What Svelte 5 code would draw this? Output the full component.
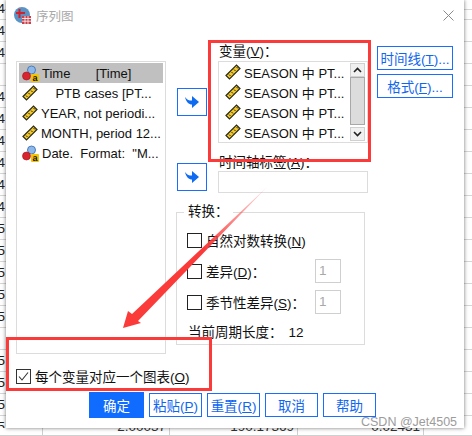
<script>
  const leftDigits = ['4','4','4','','4','4','4','4','4','4','5','5','5','5','5','','5','5','5','5']
  const sourceVars = [
    { kind: 'nominal', label: 'Time       [Time]', selected: true },
    { kind: 'scale', label: '    PTB cases [PT...' },
    { kind: 'scale', label: 'YEAR, not periodi...' },
    { kind: 'scale', label: 'MONTH, period 12...' },
    { kind: 'nominal', label: 'Date.  Format:  "M...' }
  ]
  const chosenVars = ['SEASON 中 PT...', 'SEASON 中 PT...', 'SEASON 中 PT...', 'SEASON 中 PT...']
</script>

{#snippet ruler()}
  <svg class="icon" width="16" height="16" viewBox="0 0 16 16">
    <path d="M1 11.5 11.5 1 15 4.5 4.5 15Z" fill="#f2c72c" stroke="#2b2b1a" stroke-width="1.2" />
    <path d="M4 10.5 5.5 12M6.5 8 8 9.5M9 5.5 10.5 7M11.5 3 13 4.5" stroke="#2b2b1a" stroke-width="1" fill="none" />
  </svg>
{/snippet}

{#snippet nominal()}
  <svg class="icon" width="17" height="17" viewBox="0 0 17 17">
    <circle cx="9.5" cy="5" r="4" fill="#8db8e8" stroke="#4a7db8" />
    <circle cx="4.5" cy="11" r="4" fill="#d9232e" stroke="#9a1820" stroke-width=".6" />
    <rect x="9" y="9" width="8" height="8" rx="1" fill="#f5c400" />
    <text x="13" y="15.6" class="a-glyph">a</text>
  </svg>
{/snippet}

{#snippet arrowBtn()}
  <div class="arrow-btn">
    <svg width="16" height="14" viewBox="0 0 16 14">
      <path d="M1 2c2 3 4 3.6 7 3.6V1l7 6-7 6V9.6C5 9.6 2 7 1 2Z" fill="#0f6cf0" />
    </svg>
  </div>
{/snippet}

<div class="screen">
  <div class="strip">
    {#each leftDigits as d}
      <div class="strip-cell">{d}</div>
    {/each}
  </div>

  <div class="dialog">
    <header class="title">
      <svg width="17" height="17" viewBox="0 0 17 17">
        <circle cx="8" cy="8" r="8" fill="#5b93c4" />
        <path d="M2 6h9M5.5 2v9" stroke="#d3202a" stroke-width="2" fill="none" />
        <rect x="8" y="9" width="9" height="8" fill="#c9404a" />
        <path d="M8 11.5h9M8 14.2h9M11 9v8M14 9v8" stroke="#fff" stroke-width=".8" />
      </svg>
      <span>序列图</span>
      <svg class="close" width="11" height="11" viewBox="0 0 11 11">
        <path d="M.5.5l10 10M10.5.5l-10 10" stroke="#8a8a8a" stroke-width="1" fill="none" />
      </svg>
    </header>

    <div class="main">
      <div class="left-col">
        <div class="source list">
          {#each sourceVars as v}
            <div class="row" class:selected={v.selected}>
              {#if v.kind === 'scale'}{@render ruler()}{:else}{@render nominal()}{/if}
              <span>{v.label}</span>
            </div>
          {/each}
        </div>
        <label class="per-chart">
          <span class="check checked">
            <svg width="13" height="13" viewBox="0 0 13 13"><path d="M2 6.5 5 10l6-7.5" stroke="#333" stroke-width="1.1" fill="none" /></svg>
          </span>
          <span>每个变量对应一个图表(<u>O</u>)</span>
        </label>
      </div>

      <div class="right-col">
        <div class="var-row">
          <div class="arrow-slot first">{@render arrowBtn()}</div>
          <div class="field">
            <div class="field-label">变量(<u>V</u>)：</div>
            <div class="chosen list">
              <div class="chosen-rows">
                {#each chosenVars as v}
                  <div class="row">{@render ruler()}<span>{v}</span></div>
                {/each}
              </div>
              <div class="scrollbar">
                <div class="sb-btn">
                  <svg width="9" height="6" viewBox="0 0 9 6"><path d="M1 5l3.5-3.5L8 5" stroke="#222" stroke-width="1.6" fill="none" /></svg>
                </div>
                <div class="sb-thumb"></div>
                <div class="sb-btn">
                  <svg width="9" height="6" viewBox="0 0 9 6"><path d="M1 1l3.5 3.5L8 1" stroke="#222" stroke-width="1.6" fill="none" /></svg>
                </div>
              </div>
            </div>
          </div>
          <div class="side-btns">
            <button class="btn side">时间线(<u>T</u>)...</button>
            <button class="btn side">格式(<u>F</u>)...</button>
          </div>
        </div>

        <div class="axis-row">
          <div class="arrow-slot">{@render arrowBtn()}</div>
          <div class="field">
            <div class="field-label axis-label">时间轴标签(<u>A</u>)：</div>
            <div class="axis-input"></div>
          </div>
        </div>

        <fieldset class="group">
          <legend>转换：</legend>
          <div class="opt first-opt"><span class="check"></span><span>自然对数转换(<u>N</u>)</span></div>
          <div class="opt"><span class="check"></span><span>差异(<u>D</u>)：</span><span class="num">1</span></div>
          <div class="opt"><span class="check"></span><span>季节性差异(<u>S</u>)：</span><span class="num">1</span></div>
          <div class="period"><span>当前周期长度：</span><span>12</span></div>
        </fieldset>
      </div>
    </div>

    <div class="actions">
      <button class="btn primary">确定</button>
      <button class="btn">粘贴(<u>P</u>)</button>
      <button class="btn">重置(<u>R</u>)</button>
      <button class="btn">取消</button>
      <button class="btn">帮助</button>
    </div>
  </div>

  <div class="strip right"></div>

  <div class="bottom">
    <span></span>
    <span>2.00037</span>
    <span>190.17369</span>
    <span>0.02431</span>
  </div>

  <!-- annotations painted over the screenshot -->
  <div class="mark mark-top"></div>
  <div class="mark mark-bottom"></div>
  <svg class="arrow-overlay" width="472" height="436" viewBox="0 0 472 436">
    <defs>
      <linearGradient id="fade" gradientUnits="userSpaceOnUse" x1="267" y1="187" x2="205" y2="249">
        <stop offset="0" stop-color="#fb3a3a" stop-opacity="0.15" />
        <stop offset="1" stop-color="#fb3a3a" />
      </linearGradient>
    </defs>
    <path d="M267 187 L132 314 L128 311 L123 328 L141 323 L138 321Z" fill="url(#fade)" />
  </svg>
  <div class="watermark">CSDN @Jet4505</div>
</div>

<style>
  :global(body) {
    margin: 0;
    background: #fff;
  }

  .screen {
    position: relative;
    display: grid;
    grid-template-columns: 6px 458px 8px;
    grid-template-rows: 428px 8px;
    width: 472px;
    height: 436px;
    overflow: hidden;
    font-family: "Liberation Sans", "Noto Sans CJK SC", sans-serif;
    font-size: 13.5px;
    color: #111;
    background: #fff;
  }

  .strip {
    background: repeating-linear-gradient(to bottom, #d6d6d6 0 1px, #fff 1px 22px) 0 19px;
    overflow: hidden;
  }

  .strip-cell {
    height: 22px;
    width: 5px;
    line-height: 17px;
    direction: rtl;
    overflow: hidden;
    color: #222;
  }

  .dialog {
    position: relative;
    z-index: 1;
    display: flex;
    flex-direction: column;
    background: #fff;
    box-shadow: 0 0 4px rgba(0, 0, 0, 0.55);
    min-width: 0;
  }

  .title {
    display: flex;
    align-items: center;
    gap: 5px;
    height: 30px;
    padding: 0 10px 0 8px;
    color: #a8a8a8;
    font-size: 12.5px;
    box-sizing: border-box;
  }

  .close {
    margin-left: auto;
  }

  .main {
    display: flex;
    padding: 14px 0 0 10px;
    height: 348px;
    box-sizing: border-box;
  }

  .list {
    border: 1px solid #dcdcdc;
    box-sizing: border-box;
    font-size: 13px;
  }

  .left-col {
    width: 150px;
    margin-top: 17px;
  }

  .source {
    width: 150px;
    height: 293px;
    padding: 1px 2px;
  }

  .row {
    display: flex;
    align-items: center;
    gap: 3px;
    height: 20px;
    padding-left: 3px;
    white-space: pre;
  }

  .row.selected {
    background: #c0c0c0;
  }

  .icon {
    flex: none;
  }

  .a-glyph {
    font-size: 9px;
    font-weight: 700;
    text-anchor: middle;
    fill: #111;
  }

  .per-chart {
    display: flex;
    align-items: center;
    gap: 4px;
    width: 195px;
    margin-top: 12px;
    white-space: nowrap;
  }

  .check {
    display: inline-flex;
    flex: none;
    align-items: center;
    justify-content: center;
    width: 15px;
    height: 15px;
    box-sizing: border-box;
    border: 1px solid #222;
  }

  .check.checked {
    border-color: #333;
  }

  .right-col {
    margin-left: 10px;
    width: 278px;
    display: flex;
    flex-direction: column;
  }

  .var-row,
  .axis-row {
    display: flex;
  }

  .arrow-slot {
    width: 42px;
    flex: none;
    padding-left: 1px;
    box-sizing: border-box;
  }

  .arrow-slot.first {
    padding-top: 44px;
  }

  .arrow-btn {
    display: flex;
    align-items: center;
    justify-content: center;
    width: 30px;
    height: 28px;
    box-sizing: border-box;
    border: 1px solid #1a6dff;
  }

  .field {
    width: 150px;
    flex: none;
  }

  .field-label {
    height: 17px;
    line-height: 16px;
    padding-left: 1px;
    white-space: nowrap;
  }

  .chosen {
    display: flex;
    height: 82px;
    padding: 0 1px 1px;
  }

  .chosen-rows {
    flex: 1;
    min-width: 0;
  }

  .chosen .row {
    padding-left: 5px;
  }

  .scrollbar {
    display: flex;
    flex-direction: column;
    width: 15px;
    margin: 1px 1px 0 0;
  }

  .sb-btn {
    display: flex;
    align-items: center;
    justify-content: center;
    height: 14px;
    background: #f0f0f0;
    border: 1px solid #d0d0d0;
    box-sizing: border-box;
  }

  .sb-thumb {
    flex: 1;
    margin: 0 0 2px;
    background: #dcdcdc;
    border: 1px solid #a8a8a8;
  }

  .side-btns {
    display: flex;
    flex-direction: column;
    gap: 4px;
    margin: 2px 0 0 9px;
  }

  .btn {
    width: 53px;
    height: 24px;
    padding: 0;
    background: #fff;
    border: 1px solid #1a6dff;
    color: #0f66f0;
    font: inherit;
    white-space: nowrap;
  }

  .btn.side {
    width: 76px;
  }

  .axis-row {
    height: 68px;
    margin-top: 20px;
  }

  .axis-label {
    margin-top: -8px;
    height: 16px;
  }

  .axis-input {
    height: 22px;
    border: 1px solid #dcdcdc;
    box-sizing: border-box;
  }

  .group {
    position: relative;
    width: 189px;
    height: 140px;
    margin: -26px 0 0;
    padding: 0 0 0 10px;
    border: 1px solid #dcdcdc;
    box-sizing: border-box;
  }

  legend {
    padding: 0 4px;
    margin-left: -3px;
    line-height: 14px;
  }

  .opt {
    display: flex;
    align-items: center;
    gap: 4px;
    height: 24px;
    margin-top: 7px;
    white-space: nowrap;
  }

  .first-opt {
    margin-top: 9px;
  }

  .num {
    position: absolute;
    left: 138px;
    width: 26px;
    height: 24px;
    box-sizing: border-box;
    border: 1px solid #cfcfcf;
    padding-left: 3px;
    line-height: 22px;
    color: #a8a8a8;
  }

  .period {
    display: flex;
    align-items: baseline;
    gap: 6px;
    margin-top: 7px;
    padding-left: 1px;
  }

  .actions {
    display: flex;
    align-items: center;
    gap: 5px;
    height: 26px;
    padding-left: 83px;
    margin-top: 14px;
  }

  .btn.primary {
    width: 55px;
    height: 26px;
    background: #0f6cff;
    color: #fff;
    border: 0;
  }

  .bottom {
    grid-column: 1 / -1;
    display: grid;
    grid-template-columns: 43px 127px 128px 126px;
    height: 8px;
    overflow: hidden;
    box-sizing: border-box;
    border-bottom: 1px solid #d0d0d0;
    text-align: right;
    color: #333;
  }

  .bottom span {
    height: 12px;
    margin-top: -4px;
    line-height: 5px;
    padding-right: 3px;
    border-right: 1px solid #d0d0d0;
  }

  .mark {
    position: absolute;
    z-index: 2;
    border: 3px solid #fb3a3a;
    box-sizing: border-box;
  }

  .mark-top {
    left: 208px;
    top: 40px;
    width: 163px;
    height: 122px;
  }

  .mark-bottom {
    left: 6px;
    top: 337px;
    width: 206px;
    height: 54px;
  }

  .arrow-overlay {
    position: absolute;
    z-index: 2;
    left: 0;
    top: 0;
    pointer-events: none;
  }

  .watermark {
    position: absolute;
    z-index: 2;
    left: 361px;
    top: 415px;
    font-size: 12.5px;
    color: #9c9c9c;
    white-space: nowrap;
  }
</style>
